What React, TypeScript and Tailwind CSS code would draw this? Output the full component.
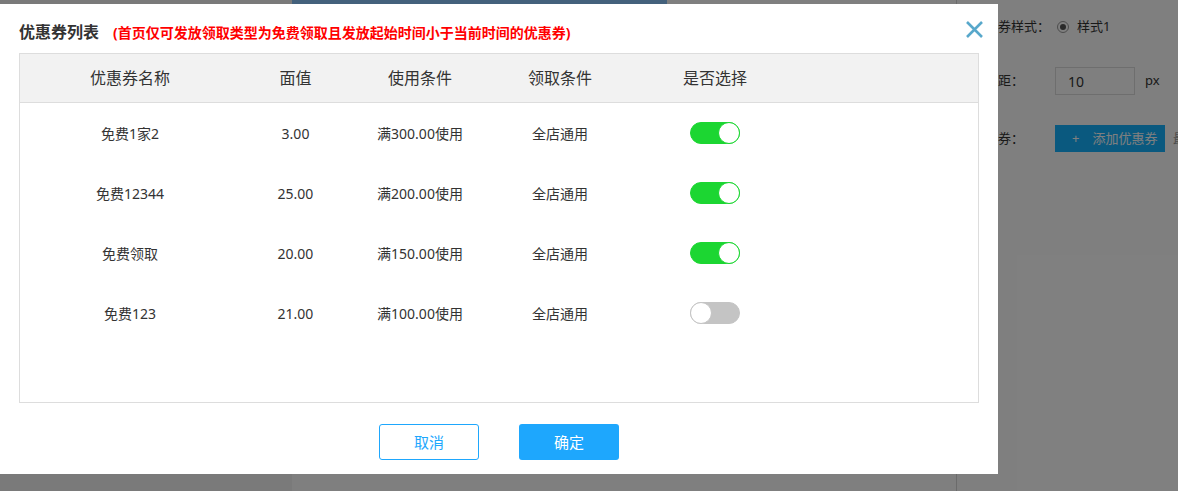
import { useState } from "react";

interface Coupon {
  id: number;
  name: string;
  value: string;
  useCondition: string;
  getCondition: string;
  selected: boolean;
}

const initialCoupons: Coupon[] = [
  { id: 1, name: "免费1家2", value: "3.00", useCondition: "满300.00使用", getCondition: "全店通用", selected: true },
  { id: 2, name: "免费12344", value: "25.00", useCondition: "满200.00使用", getCondition: "全店通用", selected: true },
  { id: 3, name: "免费领取", value: "20.00", useCondition: "满150.00使用", getCondition: "全店通用", selected: true },
  { id: 4, name: "免费123", value: "21.00", useCondition: "满100.00使用", getCondition: "全店通用", selected: false },
];

const cols = "grid grid-cols-[220px_111px_138px_142px_168px_1fr]";

function Toggle({ on, onChange }: { on: boolean; onChange: () => void }) {
  return (
    <button
      type="button"
      onClick={onChange}
      className={`relative w-[50px] h-[22px] rounded-full border ${
        on ? "bg-[#1cd632] border-[#1cd632]" : "bg-[#c4c4c4] border-[#c4c4c4]"
      }`}
    >
      <span
        className={`absolute top-[-1px] w-[22px] h-[22px] rounded-full bg-white border ${
          on ? "right-[-1px] border-[#1cd632]" : "left-[-1px] border-[#c4c4c4]"
        }`}
      />
    </button>
  );
}

function BackgroundPage() {
  return (
    <div className="absolute inset-0 flex bg-white">
      <div className="w-[292px] shrink-0 bg-[#f4f4f4]" />
      <div className="w-[664px] shrink-0 flex flex-col">
        <div className="h-[4px] w-[375px] bg-[#88c2f8]" />
      </div>
      <div className="w-[300px] shrink-0 border-l border-[#d6d6d6] text-[13px] text-[#333] pt-[17px] whitespace-nowrap">
        <div className="flex items-center h-[20px]">
          <span className="w-[88px] shrink-0 pl-[15px]">优惠券样式：</span>
          <span className="ml-[12px] w-[12px] h-[12px] shrink-0 rounded-full border border-[#999] flex items-center justify-center">
            <span className="w-[6px] h-[6px] rounded-full bg-[#555]" />
          </span>
          <span className="ml-[8px]">样式1</span>
        </div>
        <div className="flex items-center mt-[30px] h-[28px]">
          <span className="w-[88px] shrink-0 pl-[15px]">页边距：</span>
          <span className="ml-[10px] w-[80px] h-[28px] shrink-0 border border-[#ddd] flex items-center pl-[12px] text-[14px]">10</span>
          <span className="ml-[10px]">px</span>
        </div>
        <div className="flex items-center mt-[30px] h-[27px]">
          <span className="w-[88px] shrink-0 pl-[15px]">优惠券：</span>
          <span className="ml-[10px] w-[110px] h-[27px] shrink-0 bg-[#15b3fe] text-white flex items-center pl-[17px] gap-[13px]">
            <span>+</span>
            <span>添加优惠券</span>
          </span>
          <span className="ml-[8px] text-[#999]">最多</span>
        </div>
      </div>
    </div>
  );
}

export default function App() {
  const [coupons, setCoupons] = useState(initialCoupons);

  const toggle = (id: number) =>
    setCoupons((list) => list.map((c) => (c.id === id ? { ...c, selected: !c.selected } : c)));

  return (
    <div className="relative w-full h-[491px] overflow-hidden font-['Noto_Sans','Noto_Sans_CJK_SC',sans-serif]">
      <BackgroundPage />
      <div className="absolute inset-0 bg-black/50" />

      <div className="absolute left-0 top-[4px] w-[998px] h-[470px] bg-white px-[19px]">
        <div className="flex items-baseline pt-[16px] h-[49px]">
          <h2 className="text-[16px] font-bold text-[#333]">优惠券列表</h2>
          <span className="ml-[14px] text-[14px] font-bold text-[#ff0000]">
            (首页仅可发放领取类型为免费领取且发放起始时间小于当前时间的优惠券)
          </span>
        </div>
        <button type="button" className="absolute right-[14px] top-[16px] w-[19px] h-[19px]">
          <svg viewBox="0 0 19 19" className="w-[19px] h-[19px]">
            <path d="M2 2 L17 17 M17 2 L2 17" stroke="#58a8cb" strokeWidth="2.6" />
          </svg>
        </button>

        <div className="h-[350px] border border-[#dddddd]">
          <div className={`${cols} h-[49px] items-center bg-[#f2f2f2] border-b border-[#dddddd] text-[16px] text-[#333]`}>
            <div className="text-center">优惠券名称</div>
            <div className="text-center">面值</div>
            <div className="text-center">使用条件</div>
            <div className="text-center">领取条件</div>
            <div className="text-center">是否选择</div>
            <div />
          </div>
          {coupons.map((c) => (
            <div key={c.id} className={`${cols} h-[60px] items-center text-[14px] text-[#333]`}>
              <div className="text-center">{c.name}</div>
              <div className="text-center">{c.value}</div>
              <div className="text-center">{c.useCondition}</div>
              <div className="text-center">{c.getCondition}</div>
              <div className="flex justify-center">
                <Toggle on={c.selected} onChange={() => toggle(c.id)} />
              </div>
              <div />
            </div>
          ))}
        </div>

        <div className="flex justify-center gap-[40px] mt-[21px]">
          <button type="button" className="w-[100px] h-[36px] rounded-[3px] border border-[#1ea7fd] text-[#1ea7fd] text-[15px] bg-white">
            取消
          </button>
          <button type="button" className="w-[100px] h-[36px] rounded-[3px] bg-[#1ea7fd] text-white text-[15px]">
            确定
          </button>
        </div>
      </div>
    </div>
  );
}
